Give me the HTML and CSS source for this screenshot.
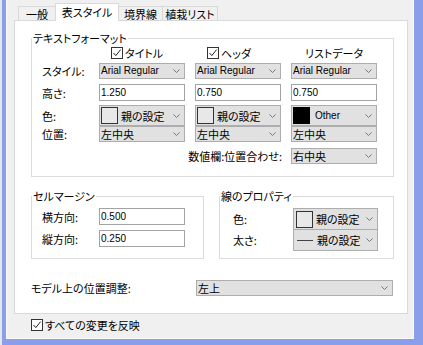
FILE: index.html
```html
<!DOCTYPE html>
<html lang="ja">
<head>
<meta charset="utf-8">
<link rel="stylesheet" href="styles.css">
</head>
<body>
<div class="win">
  <div class="inner">
    <div class="tabs">
      <div class="tab t1">一般</div>
      <div class="tab t2 sel">表スタイル</div>
      <div class="tab t3">境界線</div>
      <div class="tab t4">植栽リスト</div>
    </div>
    <div class="panel">
      <fieldset class="grp fmt">
        <legend>テキストフォーマット</legend>
        <div class="gbody">
          <div class="row hdr">
            <span></span>
            <span class="chk"><svg class="cb" width="12" height="12" viewBox="0 0 12 12"><rect x="0.5" y="0.5" width="11" height="11" fill="#fff" stroke="#333"/><polyline points="2.5,6 4.8,8.6 9.6,2.6" fill="none" stroke="#222" stroke-width="1"/></svg>タイトル</span>
            <span class="chk"><svg class="cb" width="12" height="12" viewBox="0 0 12 12"><rect x="0.5" y="0.5" width="11" height="11" fill="#fff" stroke="#333"/><polyline points="2.5,6 4.8,8.6 9.6,2.6" fill="none" stroke="#222" stroke-width="1"/></svg>ヘッダ</span>
            <span class="ctr">リストデータ</span>
          </div>
          <div class="row r-style">
            <span>スタイル:</span>
            <div class="dd"><span class="ddt lat">Arial Regular</span><svg class="chev" width="7" height="4" viewBox="0 0 7 4"><polyline points="0.5,0.5 3.5,3.5 6.5,0.5" fill="none" stroke="#777"/></svg></div>
            <div class="dd"><span class="ddt lat">Arial Regular</span><svg class="chev" width="7" height="4" viewBox="0 0 7 4"><polyline points="0.5,0.5 3.5,3.5 6.5,0.5" fill="none" stroke="#777"/></svg></div>
            <div class="dd"><span class="ddt lat">Arial Regular</span><svg class="chev" width="7" height="4" viewBox="0 0 7 4"><polyline points="0.5,0.5 3.5,3.5 6.5,0.5" fill="none" stroke="#777"/></svg></div>
          </div>
          <div class="row r-height">
            <span>高さ:</span>
            <div class="inp lat">1.250</div>
            <div class="inp lat">0.750</div>
            <div class="inp lat">0.750</div>
          </div>
          <div class="row r-color">
            <span>色:</span>
            <div class="dd tall"><span class="sw"></span><span class="ddt">親の設定</span><svg class="chev" width="7" height="4" viewBox="0 0 7 4"><polyline points="0.5,0.5 3.5,3.5 6.5,0.5" fill="none" stroke="#777"/></svg></div>
            <div class="dd tall"><span class="sw"></span><span class="ddt">親の設定</span><svg class="chev" width="7" height="4" viewBox="0 0 7 4"><polyline points="0.5,0.5 3.5,3.5 6.5,0.5" fill="none" stroke="#777"/></svg></div>
            <div class="dd tall"><span class="sw black"></span><span class="ddt lat other">Other</span><svg class="chev" width="7" height="4" viewBox="0 0 7 4"><polyline points="0.5,0.5 3.5,3.5 6.5,0.5" fill="none" stroke="#777"/></svg></div>
          </div>
          <div class="row r-pos">
            <span>位置:</span>
            <div class="dd"><span class="ddt">左中央</span><svg class="chev" width="7" height="4" viewBox="0 0 7 4"><polyline points="0.5,0.5 3.5,3.5 6.5,0.5" fill="none" stroke="#777"/></svg></div>
            <div class="dd"><span class="ddt">左中央</span><svg class="chev" width="7" height="4" viewBox="0 0 7 4"><polyline points="0.5,0.5 3.5,3.5 6.5,0.5" fill="none" stroke="#777"/></svg></div>
            <div class="dd"><span class="ddt">左中央</span><svg class="chev" width="7" height="4" viewBox="0 0 7 4"><polyline points="0.5,0.5 3.5,3.5 6.5,0.5" fill="none" stroke="#777"/></svg></div>
          </div>
          <div class="row r-num">
            <span class="numlabel">数値欄:位置合わせ:</span>
            <div class="dd c4"><span class="ddt">右中央</span><svg class="chev" width="7" height="4" viewBox="0 0 7 4"><polyline points="0.5,0.5 3.5,3.5 6.5,0.5" fill="none" stroke="#777"/></svg></div>
          </div>
        </div>
      </fieldset>

      <div class="pair">
        <fieldset class="grp cell">
          <legend>セルマージン</legend>
          <div class="gbody">
            <div class="crow">
              <span>横方向:</span>
              <div class="inp lat">0.500</div>
            </div>
            <div class="crow">
              <span>縦方向:</span>
              <div class="inp lat">0.250</div>
            </div>
          </div>
        </fieldset>
        <fieldset class="grp line">
          <legend>線のプロパティ</legend>
          <div class="gbody">
            <div class="lrow first">
              <span>色:</span>
              <div class="dd big"><span class="sw"></span><span class="ddt">親の設定</span><svg class="chev" width="7" height="4" viewBox="0 0 7 4"><polyline points="0.5,0.5 3.5,3.5 6.5,0.5" fill="none" stroke="#777"/></svg></div>
            </div>
            <div class="lrow second">
              <span>太さ:</span>
              <div class="dd big"><span class="dash"></span><span class="ddt">親の設定</span><svg class="chev" width="7" height="4" viewBox="0 0 7 4"><polyline points="0.5,0.5 3.5,3.5 6.5,0.5" fill="none" stroke="#777"/></svg></div>
            </div>
          </div>
        </fieldset>
      </div>

      <div class="model">
        <span>モデル上の位置調整:</span>
        <div class="dd"><span class="ddt">左上</span><svg class="chev" width="7" height="4" viewBox="0 0 7 4"><polyline points="0.5,0.5 3.5,3.5 6.5,0.5" fill="none" stroke="#777"/></svg></div>
      </div>
    </div>

    <div class="apply"><svg class="cb" width="12" height="12" viewBox="0 0 12 12"><rect x="0.5" y="0.5" width="11" height="11" fill="#fff" stroke="#333"/><polyline points="2.5,6 4.8,8.6 9.6,2.6" fill="none" stroke="#222" stroke-width="1"/></svg><span>すべての変更を反映</span></div>
  </div>
</div>
</body>
</html>
```

FILE: styles.css
```css
* { box-sizing: border-box; }

body {
  margin: 0;
  background: #e6e6e6;
  font-family: "Noto Sans CJK JP", sans-serif;
  font-size: 11px;
  line-height: 14px;
  color: #000;
  font-feature-settings: "palt";
}

.win {
  margin-left: 2px;
  width: 421px;
  height: 345px;
  border-left: 4px solid #8a9eea;
  border-right: 9px solid #8a9eea;
  border-bottom: 6px solid #8a9eea;
  background: #f0f0f0;
  overflow: hidden;
}

.inner {
  height: 100%;
  border: 1px solid #fbfbfb;
  border-top: 0;
  padding: 3px 5px 0 7px;
}

/* tabs */
.tabs {
  display: flex;
  align-items: flex-end;
  height: 17px;
  margin-left: 4px;
  position: relative;
  z-index: 1;
}
.tab {
  height: 14px;
  border: 1px solid #d9d9d9;
  border-bottom: 0;
  background: #f0f0f0;
  display: flex;
  align-items: center;
  justify-content: center;
  margin-left: -1px;
}
.tab.t1 { margin-left: 0; width: 38px; }
.tab.t2 { width: 64px; }
.tab.t3 { width: 45px; }
.tab.t4 { width: 56px; }
.tab.sel {
  height: 18px;
  background: #fff;
  margin-bottom: -1px;
  position: relative;
  z-index: 2;
  padding-bottom: 2px;
}

/* panel */
.panel {
  width: 394px;
  border: 1px solid #d9d9d9;
  background: #fff;
  padding: 10px 0 18px 16px;
}

.grp {
  margin: 0;
  padding: 0;
  border: 1px solid #dcdcdc;
  min-width: 0;
}
.grp legend {
  padding: 0 1px;
  line-height: 14px;
}

.fmt { width: 363px; }
.fmt .gbody { padding: 0 0 13px 10px; }

.row {
  display: grid;
  grid-template-columns: 47px 86px 86px 86px;
  column-gap: 10px;
  align-items: center;
}
.hdr { height: 14px; margin-top: 1px; }
.r-style { height: 16px; margin-top: 3px; }
.r-height { height: 17px; margin-top: 5px; }
.r-color { height: 21px; margin-top: 4px; }
.r-pos { height: 15px; margin-top: 0; }
.r-num { height: 15px; margin-top: 7px; }

.chk {
  display: flex;
  align-items: center;
  padding-left: 12px;
}
.chk .cb { margin-right: 2px; }
.ctr { text-align: center; }

.numlabel {
  grid-column: 1 / 4;
  justify-self: end;
  margin-right: -1px;
}
.c4 { grid-column: 4; }

.lat {
  font-family: "Liberation Sans", sans-serif;
  font-size: 10px;
}

/* dropdown */
.dd {
  height: 100%;
  display: flex;
  align-items: center;
  background: #e1e1e1;
  border: 1px solid #adadad;
  padding: 0 4px 0 1px;
  white-space: nowrap;
}
.dd .ddt { flex: 1; }
.dd .chev { flex: none; }
.dd .sw + .ddt, .dd .dash + .ddt { padding-left: 3px; }
.dd .ddt.other { padding-left: 5px; }
.dd .sw, .dd .dash { flex: none; }

.sw {
  width: 17px;
  height: 17px;
  border: 1px solid #333;
  background: #e8e8e8;
}
.sw.black { background: #000; border-color: #000; }

.dash {
  width: 16px;
  height: 1px;
  background: #444;
  margin-left: 1px;
  margin-right: 1px;
}

/* input */
.inp {
  height: 100%;
  border: 1px solid #a3a3a3;
  background: #fff;
  padding-left: 1px;
  display: flex;
  align-items: center;
}

/* bottom groups */
.pair {
  display: flex;
  gap: 15px;
  margin-top: 12px;
  width: 363px;
}
.cell { width: 173px; }
.cell .gbody { padding: 0 0 11px 10px; }
.crow {
  display: grid;
  grid-template-columns: 57px 86px;
  align-items: center;
  height: 17px;
  margin-top: 5px;
}
.line { width: 175px; }
.line .gbody { padding: 0 0 5px 13px; }
.lrow {
  display: grid;
  grid-template-columns: 60px 85px;
  align-items: center;
  height: 22px;
}
.lrow.first { margin-top: 5px; }
.lrow.second { margin-top: -1px; }
.lrow .dd { padding-left: 2px; }

.model {
  display: grid;
  grid-template-columns: 165px 197px;
  align-items: center;
  height: 15px;
  margin-top: 21px;
}

.apply {
  display: flex;
  align-items: center;
  height: 12px;
  margin-top: 5px;
  margin-left: 17px;
}
.apply .cb { margin-right: 2px; }
```
